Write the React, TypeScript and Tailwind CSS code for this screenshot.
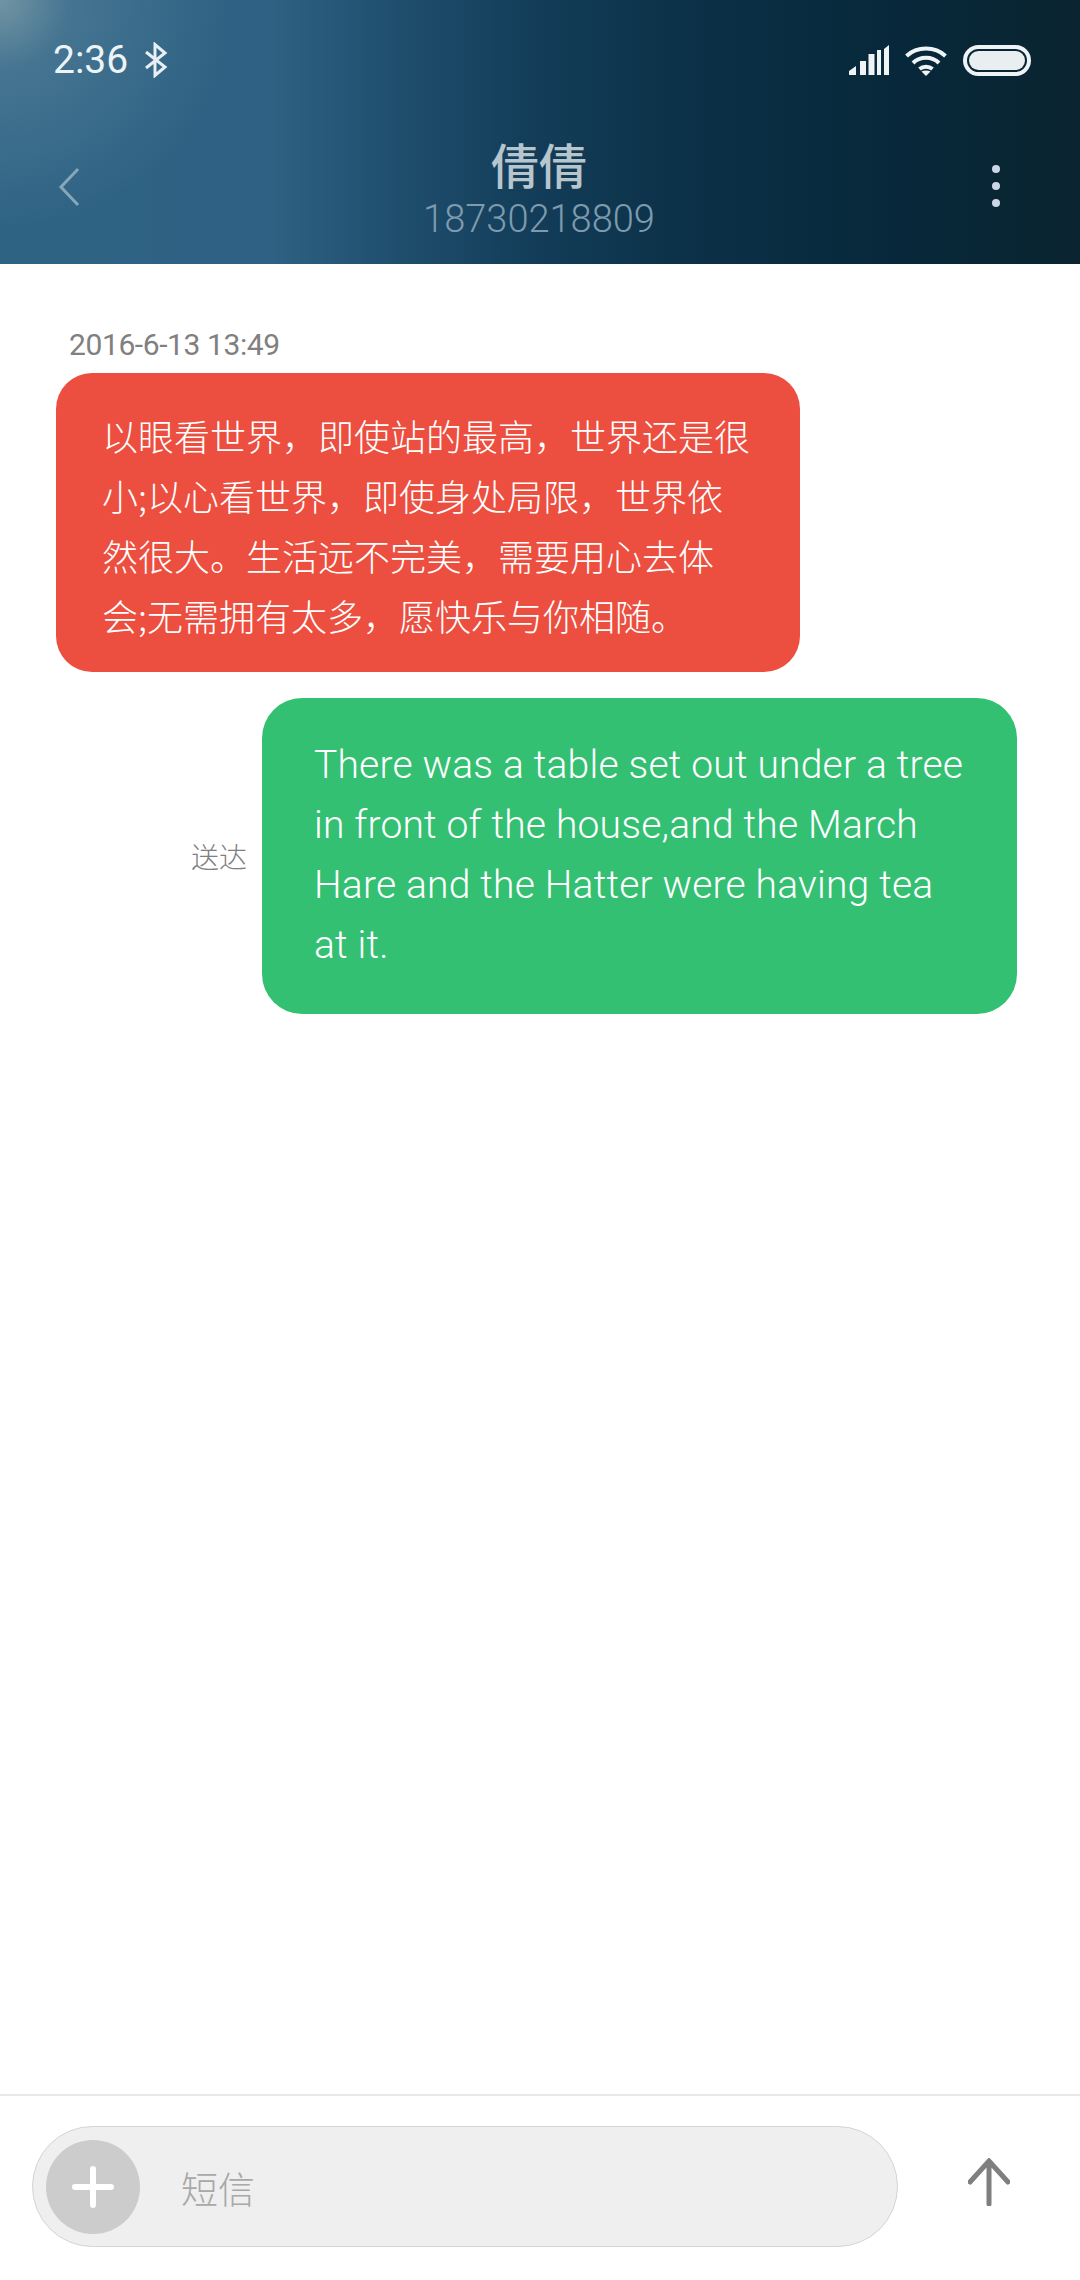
function BluetoothIcon() {
  return (
    <svg width="24" height="36" viewBox="0 0 24 36" fill="none" stroke="#e8eff5" strokeWidth="3">
      <path d="M2 10 L21 25 L11 33.5 V2.5 L21 11 L2 26" />
    </svg>
  );
}

function SignalIcon() {
  return (
    <svg width="40" height="30" viewBox="0 0 40 30" fill="#eef3f6">
      <path d="M0 30 V26 L7 21 V30 Z" />
      <rect x="11" y="16" width="6" height="14" />
      <rect x="19.5" y="9" width="6" height="21" />
      <rect x="28" y="5" width="4" height="25" />
      <path d="M35 4 L40 0 V30 H35 Z" />
    </svg>
  );
}

function WifiIcon() {
  return (
    <svg width="42" height="31" viewBox="0 0 42 31" fill="none" stroke="#eef3f6" strokeWidth="4">
      <path d="M1.5 11 C12 1 30 1 40.5 11" />
      <path d="M8 18 C15 11 27 11 34 18" />
      <path d="M14.5 24 C18 21 24 21 27.5 24" />
      <path d="M21 31 L16.5 26.5 C19 25 23 25 25.5 26.5 Z" fill="#eef3f6" stroke="none" />
    </svg>
  );
}

function BatteryIcon() {
  return (
    <div className="w-[68px] h-[31px] rounded-full border-[4px] border-[#eef3f6] p-[2px]">
      <div className="w-full h-full rounded-full bg-[#e9eef0]" />
    </div>
  );
}

export default function App() {
  return (
    <div className="w-[1080px] h-[2280px] flex flex-col bg-white font-['Liberation_Sans','Noto_Sans_CJK_SC',sans-serif]">
      <header className="h-[264px] bg-[radial-gradient(circle_at_0px_0px,rgba(150,175,180,0.65)_0px,rgba(110,150,170,0.35)_70px,rgba(60,110,145,0)_230px),linear-gradient(90deg,#2f6384_0%,#2e6183_25%,#1f4e6d_37%,#123c58_50%,#0b3046_65%,#07283a_83%,#0a2430_100%)]">
        <div className="h-[120px] pl-[53px] pr-[49px] flex items-center justify-between">
          <div className="flex items-center gap-[16px]">
            <span className="text-[39px] leading-[40px] text-[#eef3f7] font-['Roboto',sans-serif]">2:36</span>
            <BluetoothIcon />
          </div>
          <div className="flex items-center gap-[16px]">
            <SignalIcon />
            <WifiIcon />
            <BatteryIcon />
          </div>
        </div>
        <div className="h-[144px] flex items-start justify-between pl-[58px] pr-[80px]">
          <svg className="mt-[47px]" width="22" height="40" viewBox="0 0 22 40" fill="none" stroke="#86a6b9" strokeWidth="3">
            <path d="M20 2 L3 20 L20 38" />
          </svg>
          <div className="flex flex-col items-center w-[300px] ml-[6px]">
            <span className="text-[48px] leading-[54px] mt-[16px] font-medium text-[#b7c5cd] font-['Noto_Sans_CJK_SC',sans-serif]">倩倩</span>
            <span className="text-[38px] leading-[40px] mt-[9px] text-[#7e9bae] font-light font-['Roboto',sans-serif]">18730218809</span>
          </div>
          <div className="mt-[45px] flex flex-col gap-[9px]">
            <div className="w-[8px] h-[8px] rounded-full bg-[#ccd6e6]" />
            <div className="w-[8px] h-[8px] rounded-full bg-[#ccd6e6]" />
            <div className="w-[8px] h-[8px] rounded-full bg-[#ccd6e6]" />
          </div>
        </div>
      </header>

      <main className="flex-1 pt-[61px] pl-[56px] pr-[63px]">
        <div className="pl-[13px] text-[30px] leading-[40px] tracking-[-0.4px] text-[#808080] font-['Roboto',sans-serif]">2016-6-13 13:49</div>
        <div className="mt-[8px] w-[744px] h-[299px] rounded-[36px] bg-[#ec4f40] pl-[46px] pr-[50px] pt-[32px] text-[36px] leading-[60px] text-white font-['Noto_Sans_CJK_SC',sans-serif] font-light">
          以眼看世界，即使站的最高，世界还是很小;以心看世界，即使身处局限，世界依然很大。生活远不完美，需要用心去体会;无需拥有太多，愿快乐与你相随。
        </div>
        <div className="mt-[26px] flex items-center justify-end gap-[15px]">
          <span className="text-[28px] leading-[36px] text-[#808080] font-['Noto_Sans_CJK_SC',sans-serif] font-light">送达</span>
          <div className="w-[755px] h-[316px] rounded-[40px] bg-[#34c073] pl-[52px] pr-[44px] pt-[37px] text-[39px] leading-[60px] tracking-[0.2px] font-light text-white font-['Roboto',sans-serif]">
            There was a table set out under a tree in front of the house,and the March Hare and the Hatter were having tea at it.
          </div>
        </div>
      </main>

      <footer className="h-[186px] border-t-2 border-[#e8e8e8] pt-[30px] pl-[32px] pr-[70px] flex items-start justify-between">
        <div className="w-[866px] h-[121px] rounded-full bg-[#efefef] border border-[#d4d4d4] flex items-center pl-[13px]">
          <div className="w-[94px] h-[94px] rounded-full bg-[#cccccc] flex items-center justify-center">
            <svg width="42" height="42" viewBox="0 0 42 42" stroke="white" strokeWidth="6" strokeLinecap="round">
              <path d="M21 3 V39 M3 21 H39" />
            </svg>
          </div>
          <span className="ml-[41px] mt-[3px] text-[37px] leading-[44px] text-[#a8a8a8] font-['Noto_Sans_CJK_SC',sans-serif] font-light">短信</span>
        </div>
        <svg className="mt-[32px]" width="42" height="48" viewBox="0 0 42 48" fill="none" stroke="#7f7f7f" strokeWidth="5" strokeLinecap="round">
          <path d="M21 4 V46 M2 24 L21 3 L40 24" />
        </svg>
      </footer>
    </div>
  );
}
